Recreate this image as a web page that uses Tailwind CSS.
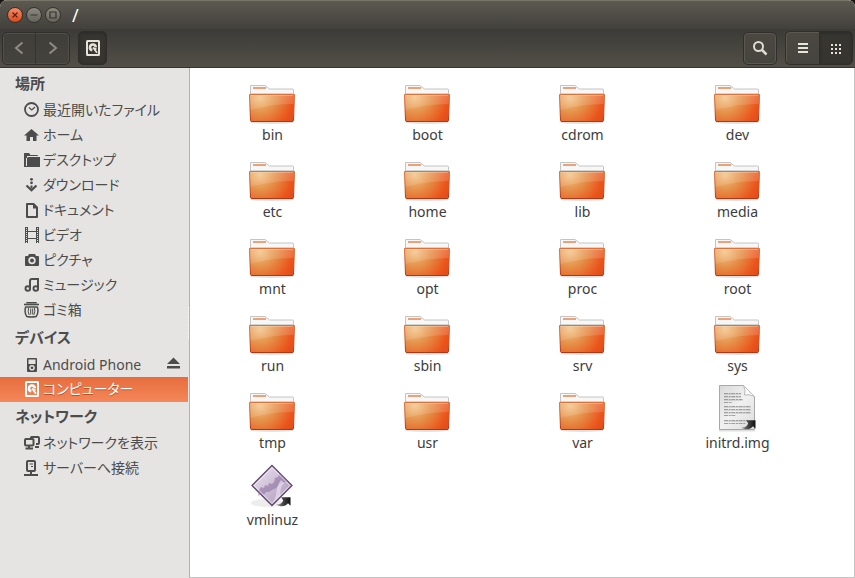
<!DOCTYPE html>
<html lang="ja">
<head>
<meta charset="utf-8">
<meta name="viewport" content="width=device-width, initial-scale=1">
<title>/</title>
<script src="https://cdn.jsdelivr.net/npm/@tailwindcss/browser@4"></script>
</head>
<body class="bg-[#1a1512] font-['Noto_Sans','Noto_Sans_CJK_JP',sans-serif] text-[#4c4c4c]">

<svg class="absolute size-0" aria-hidden="true">
  <defs>
    <radialGradient id="front" gradientUnits="userSpaceOnUse" cx="12" cy="21" r="38">
      <stop offset="0" stop-color="#f2c284"/><stop offset=".4" stop-color="#e59049"/><stop offset=".85" stop-color="#eb541b"/><stop offset="1" stop-color="#e04f1c"/>
    </radialGradient>
    <linearGradient id="shade" x1="0" y1="0" x2="0" y2="1">
      <stop offset="0" stop-color="#fff" stop-opacity=".2"/><stop offset="1" stop-color="#fff" stop-opacity=".1"/>
    </linearGradient>
    <linearGradient id="edge" x1="0" y1="0" x2="0" y2="1">
      <stop offset="0" stop-color="#d9743f"/><stop offset="1" stop-color="#b8330f"/>
    </linearGradient>
    <linearGradient id="paper" x1="0" y1="0" x2="1" y2="1">
      <stop offset="0" stop-color="#d9d9d9"/><stop offset=".5" stop-color="#f1f1f1"/><stop offset="1" stop-color="#dcdcdc"/>
    </linearGradient>
    <linearGradient id="gem" x1="0" y1="0" x2="1" y2="1">
      <stop offset="0" stop-color="#efe8f2"/><stop offset=".5" stop-color="#cdbdd6"/><stop offset="1" stop-color="#a791b5"/>
    </linearGradient>
    <linearGradient id="swoosh" x1="0" y1="0" x2="1" y2="0">
      <stop offset="0" stop-color="#aaa"/><stop offset=".5" stop-color="#444"/><stop offset="1" stop-color="#111"/>
    </linearGradient>
    <symbol id="folder" viewBox="0 0 49 48">
      <ellipse cx="24" cy="45.500" rx="22" ry="1.500" fill="#000" opacity=".12"/>
      <path d="M2.500 20V8.500H17l4.500 3.500h23q1 0 1 1v7z" fill="#f7f7f7" stroke="#c4c4c4"/>
      <rect x="5" y="10" width="13" height="2" fill="#eda177"/>
      <path d="M2 16.500h44" stroke="#bdbdbd" opacity=".6"/>
      <path d="M1.500 17.500h45l-1 26q0 1-1.500 1H4q-1.500 0-1.500-1z" fill="url(#front)" stroke="url(#edge)"/>
      <path d="M2 18h44l-.3 9Q24 27 2.500 33z" fill="url(#shade)"/>
      <path d="M3 18.500h42" stroke="#ffe1bb" opacity=".35"/>
    </symbol>
    <symbol id="link-emblem" viewBox="0 0 15 10">
      <path d="M5 .3h9.500v8.400L12 6.300C9.500 9.800 4 10.500 0 7.200c3 .8 5.800-.7 7.200-3.700z" fill="url(#swoosh)"/>
    </symbol>
    <symbol id="disk" viewBox="0 0 16 16">
      <path fill="currentColor" fill-rule="evenodd" d="M2.500 0h11Q15 0 15 1.500v13q0 1.500-1.500 1.500h-11Q1 16 1 14.500v-13Q1 0 2.500 0zM3 2v12h10V2z"/>
      <path fill="none" stroke="currentColor" stroke-width="2.600" d="M7.300 10.300A2.900 2.900 0 1 1 10.800 7.400"/>
      <path fill="none" stroke="currentColor" stroke-width="1.800" d="M8 7.500l4 5.300M8.500 8.500l3 .7"/>
    </symbol>
  </defs>
</svg>

<div class="flex min-h-screen flex-col overflow-hidden rounded-t-[7px] bg-white">
  <header>
    <div class="flex h-[29px] items-center gap-[3px] border-t border-[#77746a] bg-linear-to-b from-[#5c5950] to-[#42413c] pl-[7px]">
      <button aria-label="閉じる" class="flex size-4 items-center justify-center rounded-full border border-[#37312b] bg-linear-to-b from-[#f58a66] to-[#de4814]">
        <svg class="size-2" viewBox="0 0 8 8"><path d="M1.500 1.500l5 5m0-5l-5 5" stroke="#5c2412" stroke-width="1.300"/></svg>
      </button>
      <button aria-label="最小化" class="flex size-4 items-center justify-center rounded-full border border-[#34332e] bg-linear-to-b from-[#8d8a81] to-[#65635b]">
        <svg class="size-2" viewBox="0 0 8 8"><path d="M.5 4h7" stroke="#35342f" stroke-width="1.200"/></svg>
      </button>
      <button aria-label="最大化" class="flex size-4 items-center justify-center rounded-full border border-[#34332e] bg-linear-to-b from-[#8d8a81] to-[#65635b]">
        <svg class="size-2" viewBox="0 0 8 8"><path d="M1 1h6v6H1z" fill="none" stroke="#35342f" stroke-width="1.200"/></svg>
      </button>
      <h1 class="pl-2 text-[18px] leading-5 text-white">/</h1>
    </div>

    <div class="flex h-[39px] items-center gap-2 border-b border-[#35342f] bg-linear-to-b from-[#3c3b37] to-[#524f47] px-[2px]">
      <nav class="flex h-[33px] rounded-[5px] border border-[#302f2b] bg-linear-to-b from-[#3f3e39] to-[#45433d] text-[#8f8c83] shadow-[inset_0_0_0_1px_#504e47]">
        <button aria-label="戻る" class="flex w-[33px] items-center justify-center border-r border-[#353430]">
          <svg class="size-4" viewBox="0 0 16 16"><path d="M11.500 2.500L5 8l6.500 5.500" fill="none" stroke="currentColor" stroke-width="2"/></svg>
        </button>
        <button aria-label="進む" class="flex w-[33px] items-center justify-center">
          <svg class="size-4" viewBox="0 0 16 16"><path d="M4.500 2.500L11 8l-6.500 5.500" fill="none" stroke="currentColor" stroke-width="2"/></svg>
        </button>
      </nav>
      <button aria-label="コンピューター" class="flex h-[34px] w-[29px] items-center justify-center rounded-[5px] border border-[#2f2e2a] bg-[#363530] text-[#e6e3da] shadow-[inset_0_1px_3px_#2a2926]">
        <svg class="size-4"><use href="#disk"/></svg>
      </button>
      <button aria-label="検索" class="ml-auto flex h-[33px] w-[34px] items-center justify-center rounded-[5px] border border-[#302f2b] bg-linear-to-b from-[#4a4841] to-[#46443e] text-[#dfdbd2] shadow-[inset_0_0_0_1px_#5a584f]">
        <svg class="size-4" viewBox="0 0 16 16"><circle cx="6.500" cy="6.500" r="4.500" fill="none" stroke="currentColor" stroke-width="2"/><path d="M9.500 9.500l5 5" stroke="currentColor" stroke-width="2.500"/></svg>
      </button>
      <div class="flex h-[34px] text-[#e6e3da]">
        <button aria-label="リスト表示" class="flex w-[34px] items-center justify-center rounded-l-[5px] border border-r-0 border-[#302f2b] bg-linear-to-b from-[#4a4841] to-[#46443e] shadow-[inset_1px_1px_0_#5a584f]">
          <svg class="size-4" viewBox="0 0 16 16" fill="currentColor"><path d="M3 3h10v2H3zM3 7h10v2H3zM3 11h10v2H3z"/></svg>
        </button>
        <button aria-label="アイコン表示" aria-pressed="true" class="flex w-[34px] items-center justify-center rounded-r-[5px] border border-[#2f2e2a] bg-[#363530] shadow-[inset_0_1px_3px_#2a2926]">
          <svg class="size-4" viewBox="0 0 16 16" fill="currentColor"><path d="M3 4h2v2H3zM7 4h2v2H7zM11 4h2v2h-2zM3 8h2v2H3zM7 8h2v2H7zM11 8h2v2h-2zM3 12h2v2H3zM7 12h2v2H7zM11 12h2v2h-2z"/></svg>
        </button>
      </div>
    </div>
  </header>

  <div class="flex flex-1">
    <aside class="relative w-[190px] shrink-0 border-r border-[#b3b1ae] bg-[#e6e4e2] pt-px text-[14px] leading-5 [font-feature-settings:'palt']">
      <h2 class="flex h-[29px] items-center pb-px pl-[15px] text-[15px] font-bold leading-5">場所</h2>
      <ul>
        <li><a href="#" class="flex h-[25px] items-center gap-[3px] pb-px pl-6">
          <svg class="size-4" viewBox="0 0 16 16" fill="none" stroke="currentColor"><circle cx="7.500" cy="7.500" r="6.500" stroke-width="1.800"/><path d="M5 5.500l2.800 2.500L11 5" stroke-width="1.200"/></svg>最近開いたファイル</a></li>
        <li><a href="#" class="flex h-[25px] items-center gap-[3px] pb-px pl-6">
          <svg class="size-4" viewBox="0 0 16 16" fill="currentColor"><path d="M7.500 2l7.500 6.500H12.500V14H9v-4H6v4H2.500V8.500H0z"/></svg>ホーム</a></li>
        <li><a href="#" class="flex h-[25px] items-center gap-[3px] pb-px pl-6">
          <svg class="size-4" viewBox="0 0 16 16" fill="currentColor"><path d="M0 1.500Q0 1 .5 1H5l1.500 2H13q1 0 1 1H3v2H2v9H0z"/><path d="M3 6.500Q3 5 4.500 5H16v10H3z"/><path d="M1 15h15v-1H1z"/></svg>デスクトップ</a></li>
        <li><a href="#" class="flex h-[25px] items-center gap-[3px] pb-px pl-6">
          <svg class="size-4" viewBox="0 0 16 16" fill="currentColor"><circle cx="7.500" cy="2.300" r="1.400"/><circle cx="7.500" cy="5.800" r="1.400"/><path d="M6.500 8.500h2v3h-2z"/><path d="M2.500 8.500l5 4.800L12.500 8.500" fill="none" stroke="currentColor" stroke-width="2.200"/></svg>ダウンロード</a></li>
        <li><a href="#" class="flex h-[25px] items-center gap-[3px] pb-px pl-6">
          <svg class="size-4" viewBox="0 0 16 16"><path fill="currentColor" fill-rule="evenodd" d="M3 1h7l4 4v10q0 1-1 1H3q-1 0-1-1V2q0-1 1-1zm1 2v11h8V6.500H9V3z"/></svg>ドキュメント</a></li>
        <li><a href="#" class="flex h-[25px] items-center gap-[3px] pb-px pl-6">
          <svg class="size-4" viewBox="0 0 16 16" fill="none" stroke="currentColor"><path d="M1.500 0v16M3.500 0v16M12.500 0v16M14.500 0v16"/><path d="M4 4.500h8M4 11.500h8"/><path d="M2.500 0v16M13.500 0v16" stroke-dasharray="1 1"/></svg>ビデオ</a></li>
        <li><a href="#" class="flex h-[25px] items-center gap-[3px] pb-px pl-6">
          <svg class="size-4" viewBox="0 0 16 16"><path fill="currentColor" d="M5 2h6l1 2h2q1 0 1 1v8q0 1-1 1H2q-1 0-1-1V5q0-1 1-1h2z"/><circle cx="8" cy="8.500" r="3.700" fill="#e6e4e2"/><circle cx="8" cy="8.500" r="2" fill="currentColor"/></svg>ピクチャ</a></li>
        <li><a href="#" class="flex h-[25px] items-center gap-[3px] pb-px pl-6">
          <svg class="size-4" viewBox="0 0 16 16"><path d="M6 11.500V4q0-2 2-2h6v9.500" fill="none" stroke="currentColor" stroke-width="2"/><g fill="none" stroke="currentColor" stroke-width="1.900"><circle cx="3.800" cy="11.500" r="2.300"/><circle cx="11.800" cy="11.500" r="2.300"/></g></svg>ミュージック</a></li>
        <li><a href="#" class="flex h-[25px] items-center gap-[3px] pb-px pl-6">
          <svg class="size-4" viewBox="0 0 16 16" fill="none" stroke="currentColor"><path d="M0 2.500h15" stroke-width="1.600"/><path d="M3 1.500V.7h9v.8" stroke-width="1.400"/><path d="M1.700 4.800C.5 9 1 12 2.800 14.500q4.700 1 9.400 0C14 12 14.500 9 13.300 4.800M1.500 5h12" stroke-width="1.500"/><path d="M4.500 6q-1 4 .7 7M10.500 6q1 4-.7 7M6.700 6.500v6M8.700 6.500v6" stroke-width="1"/></svg>ゴミ箱</a></li>
      </ul>
      <h2 class="flex h-[29px] items-center pb-px pl-[15px] text-[15px] font-bold leading-5">デバイス</h2>
      <ul>
        <li class="flex h-[25px] items-center pr-[9px]"><a href="#" class="flex h-[25px] flex-1 items-center gap-[3px] pl-6">
          <svg class="size-4" viewBox="0 0 16 16"><path fill="currentColor" fill-rule="evenodd" d="M4 1h8q1 0 1 1v12q0 1-1 1H4q-1 0-1-1V2q0-1 1-1zm.5 1.500V7h7V2.500zM8 8a2.800 2.800 0 1 0 0 5.600A2.800 2.800 0 0 0 8 8z"/><circle cx="8" cy="10.800" r="1.400" fill="currentColor"/></svg>Android Phone</a>
          <button aria-label="取り出す" class="pb-px"><svg class="h-4 w-[13px]" viewBox="0 0 13 16" fill="currentColor"><path d="M6.500 1.500L13 8H0zM0 10h13v2.500H0z"/></svg></button></li>
        <li class="mr-px bg-linear-to-b from-[#e66c3c] to-[#f5875a] text-white"><a href="#" aria-current="page" class="flex h-[25px] items-center gap-[3px] pb-px pl-6 text-shadow-[0_1px_0_#b5532c]">
          <svg class="size-4"><use href="#disk"/></svg>コンピューター</a></li>
      </ul>
      <h2 class="flex h-[29px] items-center pb-px pl-[15px] text-[15px] font-bold leading-5">ネットワーク</h2>
      <ul>
        <li><a href="#" class="flex h-[25px] items-center gap-[3px] pb-px pl-6">
          <svg class="size-4" viewBox="0 0 16 16" fill="none" stroke="currentColor" stroke-width="2"><path d="M7 3V2.500Q7 2 7.500 2H14q1 0 1 1v5q0 1-1 1h-2"/><rect x="1" y="4" width="8.500" height="6.500" rx="1"/><path d="M1.500 13.500h7.500M11 12h4M5 10v3"/></svg>ネットワークを表示</a></li>
        <li><a href="#" class="flex h-[25px] items-center gap-[3px] pb-px pl-6">
          <svg class="size-4" viewBox="0 0 16 16" fill="none" stroke="currentColor"><rect x="3" y="1" width="8" height="10" rx="1" stroke-width="2"/><path d="M5.500 4h3.500M7 6.500h2" stroke-width="1"/><path d="M7 11v3M0 15h14" stroke-width="2"/></svg>サーバーへ接続</a></li>
      </ul>
      <span aria-hidden="true" class="absolute inset-y-0 right-0 my-auto h-8 border-r border-dotted border-white"></span>
    </aside>

    <main class="flex-1 border-r border-b border-[#c4c4c4] pt-[9px] pl-[5px]">
      <ul class="grid grid-cols-[repeat(auto-fill,155px)] gap-y-[9px] text-center text-[14px] leading-5 text-[#3c3c3c]">
        <li><svg class="mx-auto h-12 w-[49px]"><use href="#folder"/></svg>bin</li>
        <li><svg class="mx-auto h-12 w-[49px]"><use href="#folder"/></svg>boot</li>
        <li><svg class="mx-auto h-12 w-[49px]"><use href="#folder"/></svg>cdrom</li>
        <li><svg class="mx-auto h-12 w-[49px]"><use href="#folder"/></svg>dev</li>
        <li><svg class="mx-auto h-12 w-[49px]"><use href="#folder"/></svg>etc</li>
        <li><svg class="mx-auto h-12 w-[49px]"><use href="#folder"/></svg>home</li>
        <li><svg class="mx-auto h-12 w-[49px]"><use href="#folder"/></svg>lib</li>
        <li><svg class="mx-auto h-12 w-[49px]"><use href="#folder"/></svg>media</li>
        <li><svg class="mx-auto h-12 w-[49px]"><use href="#folder"/></svg>mnt</li>
        <li><svg class="mx-auto h-12 w-[49px]"><use href="#folder"/></svg>opt</li>
        <li><svg class="mx-auto h-12 w-[49px]"><use href="#folder"/></svg>proc</li>
        <li><svg class="mx-auto h-12 w-[49px]"><use href="#folder"/></svg>root</li>
        <li><svg class="mx-auto h-12 w-[49px]"><use href="#folder"/></svg>run</li>
        <li><svg class="mx-auto h-12 w-[49px]"><use href="#folder"/></svg>sbin</li>
        <li><svg class="mx-auto h-12 w-[49px]"><use href="#folder"/></svg>srv</li>
        <li><svg class="mx-auto h-12 w-[49px]"><use href="#folder"/></svg>sys</li>
        <li><svg class="mx-auto h-12 w-[49px]"><use href="#folder"/></svg>tmp</li>
        <li><svg class="mx-auto h-12 w-[49px]"><use href="#folder"/></svg>usr</li>
        <li><svg class="mx-auto h-12 w-[49px]"><use href="#folder"/></svg>var</li>
        <li><svg class="mx-auto h-12 w-[49px]" viewBox="0 0 49 48">
          <path d="M6 45.500h36" stroke="#000" stroke-width="2" opacity=".12"/>
          <path d="M6.500.5h24l11 11v33h-35z" fill="url(#paper)" stroke="#a8a8a8"/>
          <path d="M30.500.5q2.500 5 1 9.500 5-1 10 1.500z" fill="#fbfbfb" stroke="#bababa"/>
          <path d="M11 8.500h17M11 11.500h17M11 14.500h19M11 17.500h8M11 21.500h27M11 24.500h27M11 27.500h27M11 30.500h12M11 35.500h24M11 38.500h22" stroke="#8c8c8c" stroke-dasharray="4 .7 2 .6" opacity=".8"/>
          <path d="M11 9.500h17M11 12.500h17M11 15.500h19M11 22.500h27M11 25.500h27M11 28.500h27M11 36.500h22" stroke="#8c8c8c" opacity=".25"/>
          <use href="#link-emblem" x="28" y="35" width="15" height="10"/>
        </svg>initrd.img</li>
        <li><svg class="mx-auto h-12 w-[49px]" viewBox="0 0 49 48">
          <ellipse cx="19" cy="41" rx="16" ry="4" fill="#000" opacity=".07"/>
          <path d="M24 3.500L44 23.500l-20 20-20-20z" fill="url(#gem)" stroke="#5f4569" stroke-width="1.300"/>
          <path d="M11 28l2-3 3 1 1-3 3 1 1-3 3 1 2-2 1-4 3-1 2-4 8 8-2 1-3 0-3 2-4 4-4 2-3 2-3 0-2 3-3-1-3 2z" fill="#8f73a0" opacity=".6"/>
          <path d="M24 41c6-6 3-16 9-23l3 3c-5 5-3 11-4 13z" fill="#efe8f3" opacity=".6"/>
          <path d="M24 5.500l18 18-18 18-18-18z" fill="none" stroke="#fff" opacity=".65"/>
          <use href="#link-emblem" x="28" y="35" width="15" height="10"/>
        </svg>vmlinuz</li>
      </ul>
    </main>
  </div>
</div>
</body>
</html>
